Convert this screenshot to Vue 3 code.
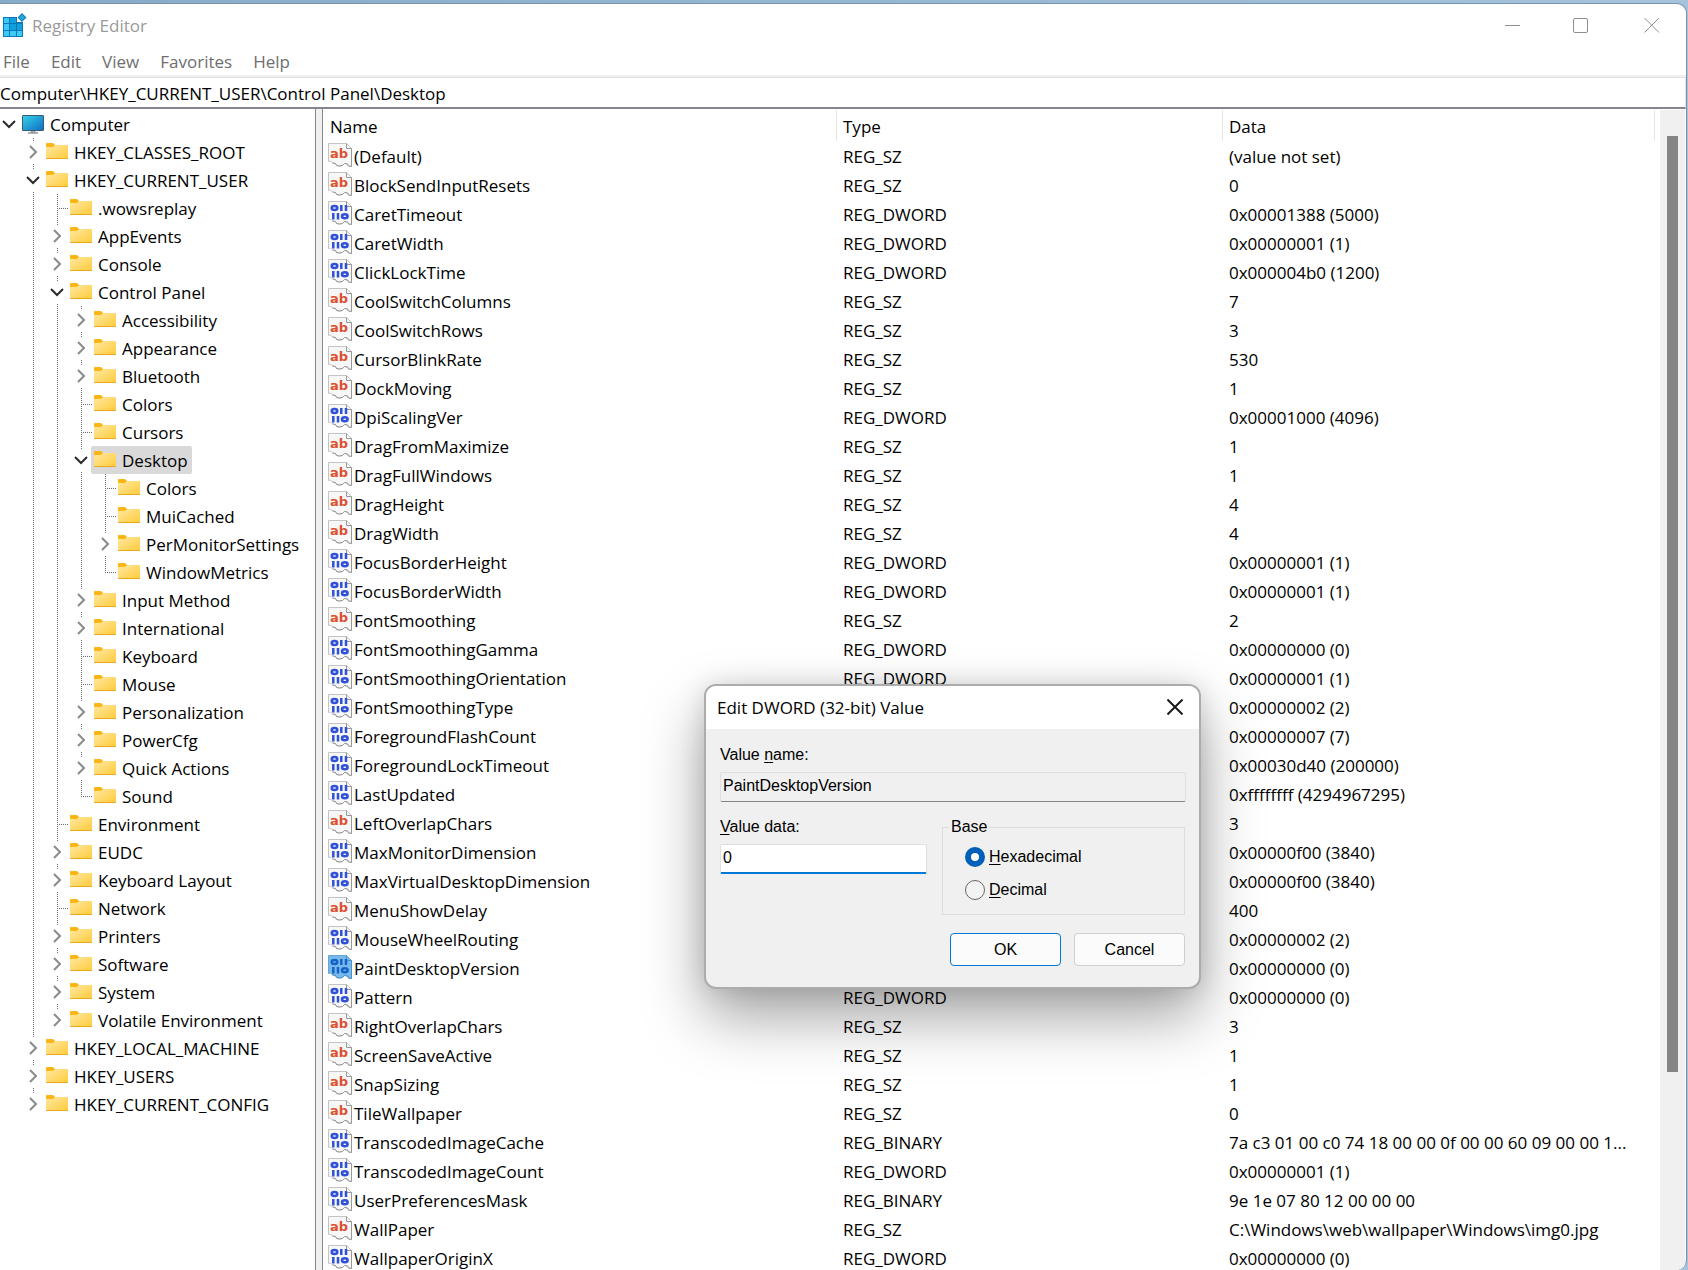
<script setup>
import { ref } from 'vue'

const menus = ['File', 'Edit', 'View', 'Favorites', 'Help']
const address = ref('Computer\\HKEY_CURRENT_USER\\Control Panel\\Desktop')
const valueName = ref('PaintDesktopVersion')
const valueData = ref('0')
const base = ref('hex')

// A key is [name, state, children]; state: '' leaf, '+' collapsed, '-' expanded
const leaf = (name) => [name, '']
const shut = (name) => [name, '+']
const open = (name, ...children) => [name, '-', children]

const root = open(
  'Computer',
  shut('HKEY_CLASSES_ROOT'),
  open(
    'HKEY_CURRENT_USER',
    leaf('.wowsreplay'),
    shut('AppEvents'),
    shut('Console'),
    open(
      'Control Panel',
      shut('Accessibility'),
      shut('Appearance'),
      shut('Bluetooth'),
      leaf('Colors'),
      leaf('Cursors'),
      open('Desktop', leaf('Colors'), leaf('MuiCached'), shut('PerMonitorSettings'), leaf('WindowMetrics')),
      shut('Input Method'),
      shut('International'),
      leaf('Keyboard'),
      leaf('Mouse'),
      shut('Personalization'),
      shut('PowerCfg'),
      shut('Quick Actions'),
      leaf('Sound'),
    ),
    leaf('Environment'),
    shut('EUDC'),
    shut('Keyboard Layout'),
    leaf('Network'),
    shut('Printers'),
    shut('Software'),
    shut('System'),
    shut('Volatile Environment'),
  ),
  shut('HKEY_LOCAL_MACHINE'),
  shut('HKEY_USERS'),
  shut('HKEY_CURRENT_CONFIG'),
)

function flatten([name, state, children = []], guides = [], last = true, depth = 0) {
  const row = { name, state, guides, last, depth }
  const inner = depth === 0 ? [] : [...guides, !last]
  return [row, ...children.flatMap((c, i) => flatten(c, inner, i === children.length - 1, depth + 1))]
}
const keys = flatten(root)

const S = 'REG_SZ'
const D = 'REG_DWORD'
const B = 'REG_BINARY'
const values = [
  ['(Default)', S, '(value not set)'],
  ['BlockSendInputResets', S, '0'],
  ['CaretTimeout', D, '0x00001388 (5000)'],
  ['CaretWidth', D, '0x00000001 (1)'],
  ['ClickLockTime', D, '0x000004b0 (1200)'],
  ['CoolSwitchColumns', S, '7'],
  ['CoolSwitchRows', S, '3'],
  ['CursorBlinkRate', S, '530'],
  ['DockMoving', S, '1'],
  ['DpiScalingVer', D, '0x00001000 (4096)'],
  ['DragFromMaximize', S, '1'],
  ['DragFullWindows', S, '1'],
  ['DragHeight', S, '4'],
  ['DragWidth', S, '4'],
  ['FocusBorderHeight', D, '0x00000001 (1)'],
  ['FocusBorderWidth', D, '0x00000001 (1)'],
  ['FontSmoothing', S, '2'],
  ['FontSmoothingGamma', D, '0x00000000 (0)'],
  ['FontSmoothingOrientation', D, '0x00000001 (1)'],
  ['FontSmoothingType', D, '0x00000002 (2)'],
  ['ForegroundFlashCount', D, '0x00000007 (7)'],
  ['ForegroundLockTimeout', D, '0x00030d40 (200000)'],
  ['LastUpdated', D, '0xffffffff (4294967295)'],
  ['LeftOverlapChars', S, '3'],
  ['MaxMonitorDimension', D, '0x00000f00 (3840)'],
  ['MaxVirtualDesktopDimension', D, '0x00000f00 (3840)'],
  ['MenuShowDelay', S, '400'],
  ['MouseWheelRouting', D, '0x00000002 (2)'],
  ['PaintDesktopVersion', D, '0x00000000 (0)'],
  ['Pattern', D, '0x00000000 (0)'],
  ['RightOverlapChars', S, '3'],
  ['ScreenSaveActive', S, '1'],
  ['SnapSizing', S, '1'],
  ['TileWallpaper', S, '0'],
  ['TranscodedImageCache', B, '7a c3 01 00 c0 74 18 00 00 0f 00 00 60 09 00 00 1...'],
  ['TranscodedImageCount', D, '0x00000001 (1)'],
  ['UserPreferencesMask', B, '9e 1e 07 80 12 00 00 00'],
  ['WallPaper', S, 'C:\\Windows\\web\\wallpaper\\Windows\\img0.jpg'],
  ['WallpaperOriginX', D, '0x00000000 (0)'],
]
</script>

<template>
  <div class="desktop">
    <main class="window">
      <header class="titlebar">
        <svg class="app-icon" viewBox="0 0 24 24" aria-hidden="true">
          <rect x="0" y="4" width="20" height="20" fill="#0a78b8" />
          <g fill="#3ccbf9">
            <rect x="1" y="5" width="5" height="5" /><rect x="1" y="11" width="5" height="6" /><rect x="1" y="18" width="5" height="5" />
            <rect x="7" y="18" width="6" height="5" /><rect x="14" y="18" width="5" height="5" />
          </g>
          <g fill="#12a0dc">
            <rect x="7" y="5" width="6" height="5" /><rect x="7" y="11" width="6" height="6" /><rect x="14" y="11" width="5" height="6" />
          </g>
          <path d="M14 3h7v6h-7z" fill="#fff" />
          <path d="M19 0l4.500 4.500-4.500 4.500-4.500-4.500z" fill="#1280b8" />
          <path d="M19 1.500l3 3-3 3-3-3z" fill="#2ba4dc" />
        </svg>
        <h1>Registry Editor</h1>
        <div class="captions">
          <button type="button" aria-label="Minimize">
            <svg viewBox="0 0 16 16"><path d="M0 8.500h15" /></svg>
          </button>
          <button type="button" aria-label="Maximize">
            <svg viewBox="0 0 16 16"><rect x=".5" y="1.500" width="14" height="14" rx="1.500" /></svg>
          </button>
          <button type="button" aria-label="Close">
            <svg viewBox="0 0 16 16"><path d="M.5 1l14.500 14.500M15 1L.5 15.500" /></svg>
          </button>
        </div>
      </header>

      <nav class="menubar">
        <button v-for="m in menus" :key="m" type="button">{{ m }}</button>
      </nav>

      <input v-model="address" class="address" type="text" aria-label="Address" />

      <div class="panes">
        <div class="tree" role="tree" aria-label="Registry keys">
          <div v-for="(k, i) in keys" :key="i" class="key" :class="{ nested: k.depth > 0 }" role="treeitem">
            <span v-for="(g, j) in k.guides" :key="j" class="cell" :class="{ line: g }"></span>
            <span
              class="cell"
              :class="{ root: k.depth === 0, line: k.depth > 0, last: k.last, leaf: !k.state }"
            >
              <button v-if="k.state" type="button" class="toggle" :class="{ open: k.state === '-' }" :aria-label="'Toggle ' + k.name">
                <svg v-if="k.state === '-'" viewBox="0 0 14 14"><path d="M1 4l6 6 6-6" /></svg>
                <svg v-else viewBox="0 0 14 14"><path d="M4 1l6 6-6 6" /></svg>
              </button>
            </span>
            <span class="label" :class="{ selected: k.name === 'Desktop' }">
              <svg v-if="k.depth === 0" class="glyph" viewBox="0 0 22 20" aria-hidden="true">
                <defs>
                  <linearGradient id="screen" x1="0" y1="0" x2="1" y2="1">
                    <stop offset="0" stop-color="#35d3e8" /><stop offset="1" stop-color="#0f6cc4" />
                  </linearGradient>
                </defs>
                <rect x=".5" y="1.500" width="21" height="15" rx=".5" fill="url(#screen)" stroke="#3b5b73" />
                <path d="M8.500 17h5v1.500h-5z" fill="#a0a8ae" /><path d="M6 18.500h10v1H6z" fill="#5d666d" />
              </svg>
              <svg v-else class="glyph" viewBox="0 0 22 20" aria-hidden="true">
                <defs>
                  <linearGradient id="folder" x1="0" y1="0" x2="1" y2="1">
                    <stop offset="0" stop-color="#ffe8a0" /><stop offset="1" stop-color="#ffcb3c" />
                  </linearGradient>
                </defs>
                <path d="M0 2q0-1 1-1h6l2 2h12q1 0 1 1v3H0z" fill="#fbb516" />
                <path d="M0 5h7l2-2h12q1 0 1 1v12q0 1-1 1H1q-1 0-1-1z" fill="url(#folder)" />
                <path d="M0 16h22q0 1-1 1H1q-1 0-1-1z" fill="#e9a81c" />
              </svg>
              <span class="text">{{ k.name }}</span>
            </span>
          </div>
        </div>

        <div class="splitter"></div>

        <section class="list">
          <table>
            <colgroup>
              <col class="c-name" />
              <col class="c-type" />
              <col />
            </colgroup>
            <thead>
              <tr><th>Name</th><th>Type</th><th>Data</th></tr>
            </thead>
            <tbody>
              <tr v-for="[name, type, data] in values" :key="name">
                <td class="name">
                  <svg class="value-icon" viewBox="0 0 24 24" aria-hidden="true">
                    <path
                      d="M.5.500h18l5 5v18l-3-.5-1-2-3-.5-2 2-3 .5-3-.5-1-2-3-.5-2-2-2 .5z"
                      :fill="name === valueName ? '#76b9ed' : '#f7f7f7'"
                      :stroke="name === valueName ? '#6aa5d2' : '#c4c4c4'"
                    />
                    <path
                      d="M18.500.500v5h5v18l-3-.5-1-2-3-.5-2 2-3 .5-3-.5-1-2-3-.5"
                      fill="none"
                      :stroke="name === valueName ? '#4b93cb' : '#989898'"
                    />
                    <text v-if="type === S" x="2" y="15" class="ab">ab</text>
                    <g v-else fill="none" :stroke="name === valueName ? '#1763c5' : '#2f50d8'" stroke-width="2.500">
                      <ellipse cx="6.500" cy="7" rx="2.800" ry="2" />
                      <path d="M13.300 4v6M18 4v6M5.300 12v6.500M10 12v6.500" />
                      <ellipse cx="16.800" cy="15.200" rx="2.800" ry="2" />
                    </g>
                  </svg>
                  <span>{{ name }}</span>
                </td>
                <td>{{ type }}</td>
                <td>{{ data }}</td>
              </tr>
            </tbody>
          </table>
          <div class="scrollbar"><div class="thumb"></div></div>
        </section>
      </div>
    </main>

    <form class="dialog" role="dialog" aria-labelledby="dlg-title" @submit.prevent>
      <header>
        <h2 id="dlg-title">Edit DWORD (32-bit) Value</h2>
        <button type="button" class="close" aria-label="Close">
          <svg viewBox="0 0 16 16"><path d="M.5.500l15 15M15.500.500l-15 15" /></svg>
        </button>
      </header>
      <div class="body">
        <label for="vname">Value <u>n</u>ame:</label>
        <input id="vname" v-model="valueName" class="field" type="text" readonly />
        <div class="columns">
          <div class="data">
            <label for="vdata"><u>V</u>alue data:</label>
            <input id="vdata" v-model="valueData" class="field active" type="text" />
          </div>
          <fieldset>
            <legend>Base</legend>
            <label><input v-model="base" type="radio" name="base" value="hex" /><span><u>H</u>exadecimal</span></label>
            <label><input v-model="base" type="radio" name="base" value="dec" /><span><u>D</u>ecimal</span></label>
          </fieldset>
        </div>
        <div class="actions">
          <button type="submit" class="primary">OK</button>
          <button type="button">Cancel</button>
        </div>
      </div>
    </form>
  </div>
</template>

<style>
body {
  margin: 0;
  overflow: hidden;
}
</style>

<style scoped>
* {
  box-sizing: border-box;
}
button,
input {
  font: inherit;
  color: inherit;
  margin: 0;
}
button {
  padding: 0;
  border: 0;
  background: none;
}
.desktop {
  position: relative;
  height: 100vh;
  padding: 3px 1px 0 0;
  overflow: hidden;
  background: linear-gradient(90deg, #86abc8, #a5c3dc);
  color: #000;
  font: 17px/28px 'Open Sans', 'Noto Sans', sans-serif;
}
.window {
  display: flex;
  flex-direction: column;
  height: 100%;
  overflow: hidden;
  background: #fff;
  border: 1px solid #7b93a8;
  border-width: 1px 1px 0 0;
  border-radius: 0 10px 10px 0;
}
.titlebar {
  display: flex;
  align-items: center;
  height: 42px;
  padding: 0 20px 0 3px;
}
.app-icon {
  width: 24px;
  height: 24px;
}
h1 {
  flex: 1;
  margin: 0 0 0 5px;
  font-size: 17px;
  font-weight: 400;
  line-height: 30px;
  padding-top: 2px;
  color: #9a9a9a;
}
.captions {
  display: flex;
  gap: 23px;
}
.captions button {
  display: grid;
  place-items: center;
  width: 48px;
  height: 32px;
}
.captions button:first-child {
  padding-left: 6px;
}
.captions button:last-child {
  width: 28px;
  margin-left: 10px;
}
.captions svg,
.close svg {
  width: 16px;
  height: 16px;
  fill: none;
  stroke: #8f8f8f;
}
.menubar {
  display: flex;
  gap: 21px;
  height: 31px;
  padding: 3px 0 0 3px;
  border-bottom: 2px solid #f0f0f0;
  color: #6e6e6e;
}
.menubar button {
  height: 26px;
  line-height: 26px;
}
.address {
  width: 100%;
  height: 32px;
  padding: 2px 0 0;
  border: 1px solid #e3e3e3;
  border-width: 1px 1px 2px 0;
  border-bottom-color: #84858d;
  outline: 0;
  background: #fff;
}
.panes {
  display: flex;
  flex: 1;
  min-height: 0;
}
.tree {
  flex: none;
  width: 316px;
  padding-top: 1px;
  border-right: 1px solid #84858d;
  overflow: hidden;
}
.splitter {
  flex: none;
  width: 7px;
  background: #f0f0f0;
  border-right: 1px solid #84858d;
}
.key {
  display: flex;
  height: 28px;
}
.key.nested {
  padding-left: 19px;
}
.cell {
  position: relative;
  display: grid;
  place-items: center;
  flex: none;
  width: 24px;
  padding-left: 4px;
}
.cell.root {
  width: 18px;
  padding-left: 0;
  margin-right: 1px;
}
.cell.line::before {
  content: '';
  position: absolute;
  left: 14px;
  top: 0;
  bottom: 0;
  width: 1px;
  background: repeating-linear-gradient(#6c6c6c 0 1px, transparent 1px 2px);
}
.cell.line.last::before {
  bottom: 13px;
}
.cell.leaf::after {
  content: '';
  position: absolute;
  left: 14px;
  right: -1px;
  top: 14px;
  height: 1px;
  background: repeating-linear-gradient(90deg, #6c6c6c 0 1px, transparent 1px 2px);
}
.toggle {
  position: relative;
  display: grid;
  place-items: center;
  width: 14px;
  height: 23px;
  background: #fff;
}
.toggle svg {
  width: 14px;
  height: 14px;
  fill: none;
  stroke: #8a8a8a;
  stroke-width: 2;
}
.toggle.open svg {
  stroke: #2b2b2b;
}
.label {
  display: flex;
  align-items: center;
  gap: 6px;
  padding: 0 4px 0 3px;
  border-radius: 2px;
  white-space: nowrap;
}
.label.selected {
  background: #d9d9d9;
}
.text {
  padding-top: 2px;
}
.glyph {
  width: 22px;
  height: 20px;
}
.list {
  display: flex;
  flex: 1;
  min-width: 0;
  padding: 1px 1px 0 0;
  overflow: hidden;
}
table {
  flex: 1;
  align-self: flex-start;
  margin-right: 5px;
  table-layout: fixed;
  border-collapse: collapse;
  width: 0;
}
.c-name {
  width: 514px;
}
.c-type {
  width: 386px;
}
th {
  height: 32px;
  padding: 0 6px;
  font-weight: 400;
  line-height: 29px;
  text-align: left;
  background: linear-gradient(#e5e5e5, #e5e5e5) right top / 1px 31px no-repeat;
}
th:first-child {
  padding-left: 7px;
}
td {
  height: 29px;
  padding: 0 0 0 6px;
  line-height: 29px;
  white-space: nowrap;
}
.name {
  display: flex;
  gap: 2px;
  padding-left: 5px;
}
.value-icon {
  width: 24px;
  height: 24px;
  margin-top: 1px;
}
.ab {
  font: bold 13px 'DejaVu Sans', sans-serif;
  fill: #dc5230;
}
.scrollbar {
  flex: none;
  width: 25px;
  padding: 26px 7px 0;
  background: #f0f0f0;
}
.thumb {
  width: 11px;
  height: 82.500%;
  background: #858585;
}

.dialog {
  position: absolute;
  left: 704px;
  top: 684px;
  width: 497px;
  border: 2px solid #acacac;
  border-radius: 12px;
  background: #f0f0f0;
  box-shadow: 0 28px 60px rgba(0, 0, 0, 0.36), 0 0 24px rgba(0, 0, 0, 0.12);
  font: 16px/20px 'Liberation Sans', Arial, sans-serif;
}
.dialog header {
  display: flex;
  justify-content: space-between;
  align-items: center;
  height: 43px;
  padding: 0 16px 0 11px;
  border-radius: 10px 10px 0 0;
  background: #fff;
}
h2 {
  margin: 0;
  font: 17px/28px 'Open Sans', 'Noto Sans', sans-serif;
}
.close {
  display: grid;
  margin-bottom: 2px;
}
.close svg {
  stroke: #1a1a1a;
  stroke-width: 2;
}
.body {
  padding: 16px 13px 21px 14px;
}
.body > label,
.data label {
  display: block;
  margin-bottom: 7px;
}
u {
  text-underline-offset: 2px;
}
.field {
  display: block;
  width: 100%;
  height: 30px;
  padding: 0 2px 2px;
  border: 1px solid #dfdfdf;
  border-bottom-color: #868686;
  border-radius: 2px;
  outline: 0;
  background: #f0f0f0;
}
.field.active {
  border-bottom: 2px solid #0078d4;
  background: #fff;
}
.columns {
  display: flex;
  gap: 15px;
  margin-top: 15px;
}
.data {
  width: 207px;
}
fieldset {
  flex: 1;
  min-width: 0;
  height: 98px;
  margin: 0 1px 0 0;
  padding: 0 0 0 22px;
  border: 1px solid #dcdcdc;
}
legend {
  margin-left: -16px;
  padding: 0 2px;
}
fieldset label {
  display: flex;
  align-items: center;
  gap: 4px;
  height: 33px;
}
fieldset legend + label {
  margin-top: 3px;
}
input[type='radio'] {
  appearance: none;
  width: 20px;
  height: 20px;
  border: 1px solid #666;
  border-radius: 50%;
  background: #f3f3f3;
}
input[type='radio']:checked {
  border: 6px solid #005fb8;
  background: #fff;
}
.actions {
  display: flex;
  justify-content: flex-end;
  gap: 13px;
  margin: 18px 1px 0 0;
}
.actions button {
  width: 111px;
  height: 33px;
  border: 1px solid #cfcfcf;
  border-radius: 4px;
  background: #fbfbfb;
}
.actions .primary {
  border-color: #0078d4;
}
</style>
